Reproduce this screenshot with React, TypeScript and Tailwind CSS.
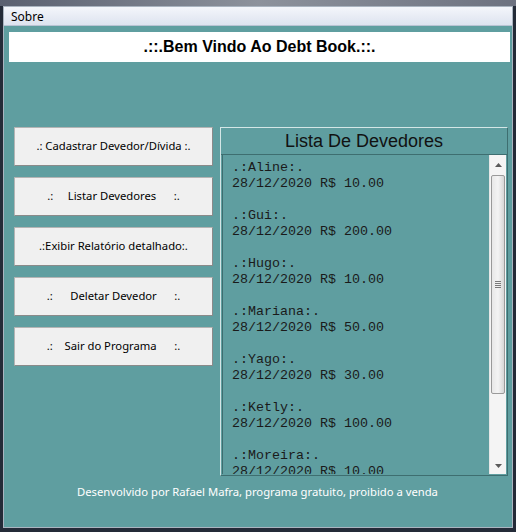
const devedores = [
  { nome: "Aline", data: "28/12/2020", valor: "10.00" },
  { nome: "Gui", data: "28/12/2020", valor: "200.00" },
  { nome: "Hugo", data: "28/12/2020", valor: "10.00" },
  { nome: "Mariana", data: "28/12/2020", valor: "50.00" },
  { nome: "Yago", data: "28/12/2020", valor: "30.00" },
  { nome: "Ketly", data: "28/12/2020", valor: "100.00" },
  { nome: "Moreira", data: "28/12/2020", valor: "10.00" },
];

const botoes = [
  ".: Cadastrar Devedor/Dívida :.",
  ".:     Listar Devedores      :.",
  ".:Exibir Relatório detalhado:.",
  ".:      Deletar Devedor      :.",
  ".:    Sair do Programa      :.",
];

const ui = { fontFamily: '"Noto Sans", "DejaVu Sans", sans-serif' };

const App = () => {
  return (
    <div className="w-[516px] h-[532px] flex flex-col bg-[#242b38] px-[3px] pb-[4px]">
      <div className="h-[6px] -mx-[3px] bg-gradient-to-r from-[#5a6070] via-[#8d929c] to-[#6d7280]" />
      <div className="flex-1 flex flex-col border border-[#aab4c0]">
        <div
          style={ui}
          className="h-[19px] flex items-center pt-[2px] px-[7px] text-[12px] text-black bg-gradient-to-b from-[#f4f6fb] to-[#dde3ef] border-b border-[#b9c3d3]"
        >
          Sobre
        </div>

        <div className="flex-1 flex flex-col bg-[#5f9ea0] pl-[5px] pr-[2px] pt-[6px]">
          <div
            style={{ fontFamily: '"Liberation Sans", Arial, sans-serif' }}
            className="h-[30px] bg-white flex items-center justify-center font-bold text-[16px] text-black"
          >
            .::.Bem Vindo Ao Debt Book.::.
          </div>

          <div className="flex mt-[65px] gap-[7px] pl-[5px]">
            <div className="flex flex-col gap-[11px] w-[199px]">
              {botoes.map((b, i) => (
                <div
                  key={i}
                  style={ui}
                  className="h-[39px] flex items-center justify-center whitespace-pre text-[11.25px] text-black bg-[#f0f0f0] border border-[#b4b4b4] border-r-[#8a8a8a] border-b-[#8a8a8a]"
                >
                  {b}
                </div>
              ))}
            </div>

            <div className="w-[288px] h-[349px] flex flex-col border border-[#d4e6e6] border-r-[#3e6e70] border-b-[#3e6e70]">
              <div
                style={{ fontFamily: '"Liberation Sans", Arial, sans-serif' }}
                className="h-[27px] flex items-center justify-center text-[18px] text-[#111] border-b border-[#3e6e70]"
              >
                Lista De Devedores
              </div>
              <div className="flex-1 flex mx-[1px] mb-[1px] border-l border-[#3e6e70] overflow-hidden">
                <div
                  style={{ fontFamily: '"Liberation Mono", "Courier New", monospace' }}
                  className="flex-1 pl-[9px] pt-[5px] text-[13.33px] leading-[16px] text-[#1a1a1a] overflow-hidden"
                >
                  {devedores.map((d, i) => (
                    <div key={i} className="whitespace-pre">
                      <div>.:{d.nome}:.</div>
                      <div>
                        {d.data} R$ {d.valor}
                      </div>
                      {i < devedores.length - 1 && <div>&nbsp;</div>}
                    </div>
                  ))}
                </div>
                <div className="w-[17px] flex flex-col bg-[#f4f4f4] border-l border-[#e6e6e6]">
                  <div className="h-[20px] flex items-center justify-center">
                    <svg width="7" height="4" viewBox="0 0 7 4">
                      <path d="M0 4 L3.5 0 L7 4 Z" fill="#5a5a5a" />
                    </svg>
                  </div>
                  <div className="h-[219px] mx-[1px] rounded-[2px] border border-[#9a9a9a] bg-gradient-to-r from-[#e8e8e8] via-[#f4f4f4] to-[#d6d6d6] flex items-center justify-center">
                    <div className="flex flex-col gap-[1px]">
                      <div className="w-[6px] h-[1px] bg-[#7a7a7a]" />
                      <div className="w-[6px] h-[1px] bg-[#7a7a7a]" />
                      <div className="w-[6px] h-[1px] bg-[#7a7a7a]" />
                      <div className="w-[6px] h-[1px] bg-[#7a7a7a]" />
                    </div>
                  </div>
                  <div className="flex-1" />
                  <div className="h-[17px] flex items-center justify-center">
                    <svg width="7" height="4" viewBox="0 0 7 4">
                      <path d="M0 0 L3.5 4 L7 0 Z" fill="#5a5a5a" />
                    </svg>
                  </div>
                </div>
              </div>
            </div>
          </div>

          <div
            style={ui}
            className="mt-[8px] text-center text-[11.25px] text-white pr-[4px]"
          >
            Desenvolvido por Rafael Mafra, programa gratuito, proibido a venda
          </div>
        </div>
      </div>
    </div>
  );
};

export default App;
